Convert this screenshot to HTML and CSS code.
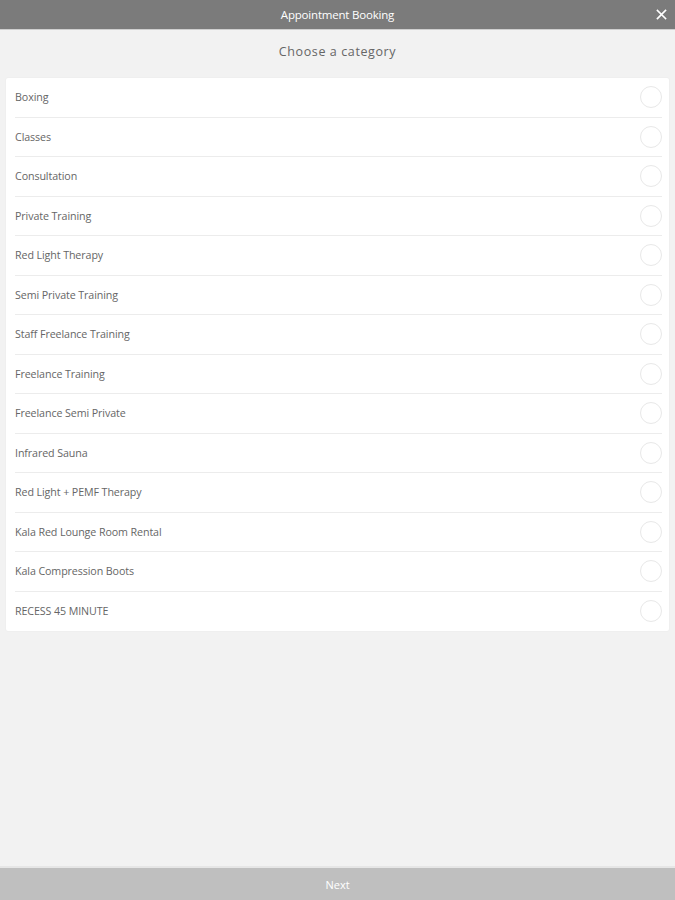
FILE: index.html
```html
<!DOCTYPE html>
<html>
<head>
<meta charset="utf-8">
<link rel="stylesheet" href="styles.css">
</head>
<body>
<div class="app">
  <header class="topbar">
    <span class="topbar-title">Appointment Booking</span>
    <svg class="close" width="11" height="11" viewBox="0 0 11 11"><path d="M1.5 1.5 L9.5 9.5 M9.5 1.5 L1.5 9.5" stroke="#fff" stroke-width="1.7" stroke-linecap="square"/></svg>
  </header>
  <h1 class="heading">Choose a category</h1>
  <ul class="list">
    <li class="row"><span>Boxing</span><i class="radio"></i></li>
    <li class="row"><span>Classes</span><i class="radio"></i></li>
    <li class="row"><span>Consultation</span><i class="radio"></i></li>
    <li class="row"><span>Private Training</span><i class="radio"></i></li>
    <li class="row"><span>Red Light Therapy</span><i class="radio"></i></li>
    <li class="row"><span>Semi Private Training</span><i class="radio"></i></li>
    <li class="row"><span>Staff Freelance Training</span><i class="radio"></i></li>
    <li class="row"><span>Freelance Training</span><i class="radio"></i></li>
    <li class="row"><span>Freelance Semi Private</span><i class="radio"></i></li>
    <li class="row"><span>Infrared Sauna</span><i class="radio"></i></li>
    <li class="row"><span>Red Light + PEMF Therapy</span><i class="radio"></i></li>
    <li class="row"><span>Kala Red Lounge Room Rental</span><i class="radio"></i></li>
    <li class="row"><span>Kala Compression Boots</span><i class="radio"></i></li>
    <li class="row"><span>RECESS 45 MINUTE</span><i class="radio"></i></li>
  </ul>
  <div class="spacer"></div>
  <footer class="footer">Next</footer>
</div>
</body>
</html>
```
FILE: styles.css
```css
html, body {
  margin: 0;
  padding: 0;
  background: #f2f2f2;
  font-family: "Open Sans", "Liberation Sans", sans-serif;
}
.app {
  height: 900px;
  display: flex;
  flex-direction: column;
}
.topbar {
  height: 30px;
  background: #7b7b7b;
  display: flex;
  align-items: center;
  justify-content: center;
  position: relative;
  border-bottom: 1px solid #cfcfcf;
  box-sizing: border-box;
}
.topbar-title {
  color: #fff;
  font-size: 11.5px;
  letter-spacing: -0.2px;
}
.close {
  position: absolute;
  right: 8px;
  top: 9px;
}
.heading {
  margin: 0;
  height: 48px;
  line-height: 44px;
  text-align: center;
  font-size: 12.5px;
  font-weight: normal;
  color: #666;
  letter-spacing: 0.6px;
}
.list {
  list-style: none;
  margin: 0 6px;
  padding: 0;
  background: #fff;
  border-radius: 2px;
  box-shadow: 0 0 2px rgba(0,0,0,0.06);
}
.row {
  height: 39.5px;
  margin: 0 7px 0 9px;
  display: flex;
  align-items: center;
  justify-content: space-between;
  border-bottom: 1px solid #ececec;
  box-sizing: border-box;
  font-size: 10.7px;
  color: #666;
  letter-spacing: -0.1px;
}
.row:last-child {
  border-bottom: none;
}
.radio {
  width: 22px;
  height: 22px;
  border: 1px solid #e8e8e8;
  border-radius: 50%;
  box-sizing: border-box;
}
.spacer {
  flex: 1;
}
.footer {
  height: 34px;
  background: #bfbfbf;
  border-top: 2px solid #e6e6e6;
  box-sizing: border-box;
  color: #fff;
  font-size: 11px;
  display: flex;
  align-items: center;
  justify-content: center;
}
```
